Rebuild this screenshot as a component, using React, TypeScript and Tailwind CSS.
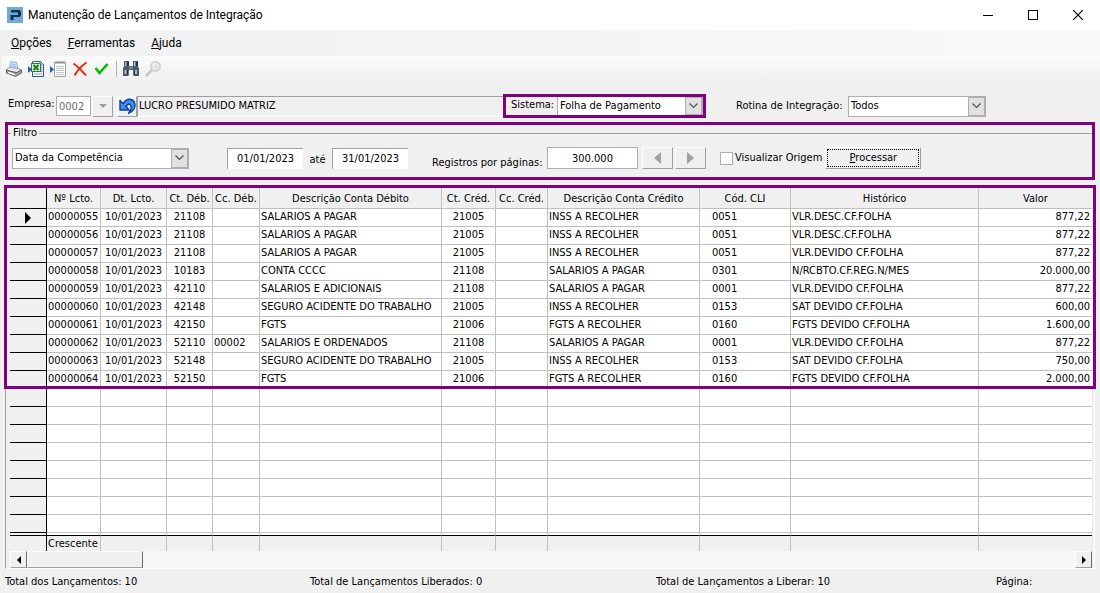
import type { ReactNode } from 'react';

type Entry = {
    number: string;
    debit: string;
    costCenter?: string;
    debitName: string;
    credit: string;
    creditName: string;
    code: string;
    history: string;
    value: string;
};

const entries: Entry[] = [
    { number: '00000055', debit: '21108', debitName: 'SALARIOS A PAGAR', credit: '21005', creditName: 'INSS A RECOLHER', code: '0051', history: 'VLR.DESC.CF.FOLHA', value: '877,22' },
    { number: '00000056', debit: '21108', debitName: 'SALARIOS A PAGAR', credit: '21005', creditName: 'INSS A RECOLHER', code: '0051', history: 'VLR.DESC.CF.FOLHA', value: '877,22' },
    { number: '00000057', debit: '21108', debitName: 'SALARIOS A PAGAR', credit: '21005', creditName: 'INSS A RECOLHER', code: '0051', history: 'VLR.DEVIDO CF.FOLHA', value: '877,22' },
    { number: '00000058', debit: '10183', debitName: 'CONTA CCCC', credit: '21108', creditName: 'SALARIOS A PAGAR', code: '0301', history: 'N/RCBTO.CF.REG.N/MES', value: '20.000,00' },
    { number: '00000059', debit: '42110', debitName: 'SALARIOS E ADICIONAIS', credit: '21108', creditName: 'SALARIOS A PAGAR', code: '0001', history: 'VLR.DEVIDO CF.FOLHA', value: '877,22' },
    { number: '00000060', debit: '42148', debitName: 'SEGURO ACIDENTE DO TRABALHO', credit: '21005', creditName: 'INSS A RECOLHER', code: '0153', history: 'SAT DEVIDO CF.FOLHA', value: '600,00' },
    { number: '00000061', debit: '42150', debitName: 'FGTS', credit: '21006', creditName: 'FGTS A RECOLHER', code: '0160', history: 'FGTS DEVIDO CF.FOLHA', value: '1.600,00' },
    { number: '00000062', debit: '52110', costCenter: '00002', debitName: 'SALARIOS E ORDENADOS', credit: '21108', creditName: 'SALARIOS A PAGAR', code: '0001', history: 'VLR.DEVIDO CF.FOLHA', value: '877,22' },
    { number: '00000063', debit: '52148', debitName: 'SEGURO ACIDENTE DO TRABALHO', credit: '21005', creditName: 'INSS A RECOLHER', code: '0153', history: 'SAT DEVIDO CF.FOLHA', value: '750,00' },
    { number: '00000064', debit: '52150', debitName: 'FGTS', credit: '21006', creditName: 'FGTS A RECOLHER', code: '0160', history: 'FGTS DEVIDO CF.FOLHA', value: '2.000,00' },
];

const headers = [
    'Nº Lcto.', 'Dt. Lcto.', 'Ct. Déb.', 'Cc. Déb.', 'Descrição Conta Débito', 'Ct. Créd.',
    'Cc. Créd.', 'Descrição Conta Crédito', 'Cód. CLI', 'Histórico', 'Valor',
];

const EMPTY_ROWS = 8;

const App = () => (
    <div className="flex min-h-screen flex-col overflow-hidden bg-[#f0f0f0] font-['DejaVu_Sans_Condensed','Noto_Sans',sans-serif] text-[11px] leading-[14px] text-black">
        <TitleBar />
        <MenuBar />
        <Toolbar />
        <CompanyRow />
        <FilterPanel />
        <EntriesGrid />
        <StatusBar />
    </div>
);

const TitleBar = () => (
    <header className="flex h-[30px] items-center bg-white pl-[7px] font-['Roboto',sans-serif] text-xs">
        <svg className="h-4 w-4" viewBox="0 0 16 16">
            <rect width="16" height="16" fill="#6fa9d6" />
            <path d="M4 3h8.500l1.500 1.500v4L12.500 10H6.500v3H3.500V8h7.500V5.500H4z" fill="#12324f" />
        </svg>
        <h1 className="ml-[5px] flex-1">Manutenção de Lançamentos de Integração</h1>
        <button aria-label="Minimizar" className="flex h-full w-[45px] items-center justify-center">
            <svg width="10" height="10" shapeRendering="crispEdges"><path d="M0 5.500h10" stroke="#000" /></svg>
        </button>
        <button aria-label="Maximizar" className="flex h-full w-[45px] items-center justify-center">
            <svg width="10" height="10" shapeRendering="crispEdges"><rect x=".5" y=".5" width="9" height="9" fill="none" stroke="#000" /></svg>
        </button>
        <button aria-label="Fechar" className="flex h-full w-[45px] items-center justify-center">
            <svg width="10" height="10"><path d="M0 0l10 10M10 0L0 10" stroke="#000" strokeWidth="1.200" /></svg>
        </button>
    </header>
);

const MenuBar = () => (
    <nav className="flex h-[26px] items-center gap-4 bg-linear-to-r from-[#f0f0f0] to-[#f9f9f9] pl-[11px] font-['Roboto',sans-serif] text-xs">
        <button><u>O</u>pções</button>
        <button><u>F</u>erramentas</button>
        <button><u>A</u>juda</button>
    </nav>
);

const ToolButton = ({ label, children }: { label: string; children: ReactNode }) => (
    <button aria-label={label} className="h-4 w-4">
        <svg className="h-4 w-4" viewBox="0 0 16 16">{children}</svg>
    </button>
);

const Toolbar = () => (
    <div className="ml-0.5 flex h-[26px] items-center gap-1.5 bg-linear-to-b from-[#fafafa] to-[#f0f0f0] pr-1 pb-px pl-1">
        <ToolButton label="Imprimir">
            <path d="M3.500 7.500L4.500 .5l6 1 1.500 6z" fill="#dceaff" stroke="#7ea3d8" strokeWidth=".8" />
            <path d="M5.500 3l4 .5M5.300 5l5 .5" stroke="#6f9ce0" strokeWidth=".8" />
            <path d="M.5 8.500L3.500 6.500l8.500 1L15.500 9l-4 2.500L.5 9.500z" fill="#ececec" stroke="#777" strokeWidth=".7" />
            <path d="M.5 9v3l9 3.500 6-3.500V9l-5.500 3z" fill="#a8a8a8" stroke="#444" strokeWidth=".8" />
            <path d="M2.500 11.500l6 2" stroke="#fff" strokeWidth="1.400" />
        </ToolButton>
        <ToolButton label="Exportar para Excel">
            <path d="M4.500 .5h8l3 3v12h-11z" fill="#fff" stroke="#2b57a5" />
            <path d="M12 1v3h3" fill="#b8cdec" stroke="#2b57a5" strokeWidth=".7" />
            <path d="M12 6.500h2.500M12 8.500h2.500M12 10.500h2.500M6 13h8.500" stroke="#7f9fce" />
            <rect x="3.500" y="2.500" width="9" height="8" fill="#d9edd3" stroke="#2f7d32" />
            <path d="M5.500 4l5 5M10.500 4l-5 5" stroke="#1c7a22" strokeWidth="2" />
            <path d="M0 5l4 3.500L0 12z" fill="#1f5fbf" />
        </ToolButton>
        <ToolButton label="Exportar texto">
            <path d="M4.500 1.500h11v14h-11z" fill="#fff" stroke="#a0a0a0" />
            <path d="M6 0v3M8 0v3M10 0v3M12 0v3M14 0v3" stroke="#777" strokeWidth=".8" />
            <path d="M6 5.500h8M6 7.500h8M6 9.500h8M6 11.500h8M6 13.500h8" stroke="#c4c4c4" />
            <path d="M0 5l4 3.500L0 12z" fill="#1f5fbf" />
        </ToolButton>
        <ToolButton label="Excluir">
            <path d="M1.500 2.500c5 3.500 8 7 12.500 12M14.500 1.500C9.500 5 5.500 9 2.500 14.500" fill="none" stroke="#e5290f" strokeWidth="2" />
        </ToolButton>
        <ToolButton label="Confirmar">
            <path d="M1.500 7l4 5L13.500 3" fill="none" stroke="#00c000" strokeWidth="2.600" />
        </ToolButton>
        <span className="h-4 w-px bg-[#b8b8b8]" />
        <ToolButton label="Localizar">
            <path d="M1 0h5v5h4V0h5v6l1 1v8h-5.500V9h-5v6H0V7l1-1z" fill="#4a5a6b" />
            <path d="M1.500 9h2v4h-2zM12 9h2v4h-2zM2 1h1.500v4H2zM11 1h1.500v4H11z" fill="#a9bacb" />
            <path d="M4 1h2v4H4zM13 1h2v4h-2zM4 9h1.500v5H4zM10.500 9H12v5h-1.500z" fill="#26313d" />
            <path d="M6 5.500h4V8H6z" fill="#73869a" />
        </ToolButton>
        <ToolButton label="Pesquisar">
            <path d="M7 9l-5.500 5.500" stroke="#c9c9c9" strokeWidth="2.800" strokeLinecap="round" />
            <circle cx="10.500" cy="5.500" r="4.700" fill="#e6e6e6" stroke="#cdcdcd" strokeWidth="1.400" />
            <path d="M8 5a2.500 2.500 0 0 1 2.500-2.500" fill="none" stroke="#fff" />
        </ToolButton>
    </div>
);

const Select = ({ id, value, className = '', label }: { id: string; value: string; className?: string; label?: string }) => (
    <div className={`relative flex border border-[#adadb3] bg-white ${className}`}>
        <select id={id} aria-label={label} className="w-full appearance-none pl-0.5 outline-none">
            <option>{value}</option>
        </select>
        <span className="pointer-events-none absolute inset-y-0 right-0 flex w-[17px] items-center justify-center border border-[#adadb3] bg-[#e1e1e1]">
            <svg width="9" height="6"><path d="M.5 .5l4 4 4-4" fill="none" stroke="#505050" strokeWidth="1.200" /></svg>
        </span>
    </div>
);

const raised = 'border border-t-white border-l-white border-r-[#a0a0a0] border-b-[#a0a0a0]';

const CompanyRow = () => (
    <div className="flex h-10 items-center pt-2 pl-2">
        <label htmlFor="company" className="w-12 pb-1">Empresa:</label>
        <input id="company" defaultValue="0002" disabled className="h-5 w-[35px] border border-[#adadb3] bg-white pl-0.5 text-[#6d6d6d]" />
        <button aria-label="Selecionar empresa" className={`ml-px flex h-[21px] w-[21px] items-center justify-center ${raised}`}>
            <svg width="8" height="4"><path d="M0 0h8L4 4z" fill="#a0a0a0" /></svg>
        </button>
        <button aria-label="Voltar empresa" className={`ml-1 flex h-[21px] w-5 items-center justify-center ${raised}`}>
            <svg width="17" height="16" viewBox="0 0 17 16">
                <path d="M1 2.500L4 5.500C6 2.500 9 .8 12 1.500c4 1 5 6 3 9.500-1.200 2-3 3.500-5.500 4.300C11.500 13 12.800 9.500 11.500 7 10.300 5 8.500 6.500 7 8.500l3 3.500H1z" fill="#3f8df0" stroke="#0b3f9c" strokeWidth="1.400" strokeLinejoin="round" />
            </svg>
        </button>
        <output className="flex h-[21px] flex-1 items-center border border-t-[#a0a0a0] border-r-0 border-b-white border-l-[#a0a0a0] pl-px">
            LUCRO PRESUMIDO MATRIZ
        </output>
        <div className="flex h-6 w-[203px] items-center border-3 border-[#800080] pl-[5px]">
            <label htmlFor="system" className="w-[46px] pb-0.5">Sistema:</label>
            <Select id="system" value="Folha de Pagamento" className="h-[18px] flex-1 border-y-0" />
        </div>
        <label htmlFor="routine" className="ml-[30px] w-28">Rotina de Integração:</label>
        <Select id="routine" value="Todos" className="mr-[114px] h-[21px] w-[138px]" />
    </div>
);

const FilterPanel = () => (
    <div className="mx-[5px] border-3 border-[#800080]">
        <fieldset className="h-[52px]">
            <legend className="flex w-full items-center gap-0.5 pt-px">
                <span className="w-[3px] border-t border-[#a0a0a0]" />
                <span>Filtro</span>
                <span className="flex-1 border-t border-[#a0a0a0]" />
            </legend>
            <div className="flex h-9 items-center pl-1">
                <Select id="period" label="Tipo de data" value="Data da Competência" className="h-[21px] w-[177px]" />
                <input aria-label="Data inicial" defaultValue="01/01/2023" className="ml-[38px] h-[21px] w-[76px] border-t border-l border-[#a0a0a0] bg-white text-center" />
                <label htmlFor="date-end" className="w-[29px] pt-1 text-center">até</label>
                <input id="date-end" defaultValue="31/01/2023" className="h-[21px] w-[76px] border-t border-l border-[#a0a0a0] bg-white text-center" />
                <label htmlFor="page-size" className="w-[139px] pt-2.5 pl-6 whitespace-nowrap">Registros por páginas:</label>
                <input id="page-size" defaultValue="300.000" className="h-[22px] w-[91px] border border-[#adadb3] bg-white text-center" />
                <button aria-label="Página anterior" className={`ml-1 flex h-[22px] w-[31px] items-center justify-center ${raised}`}>
                    <svg width="7" height="12"><path d="M7 0v12L0 6z" fill="#a0a0a0" /></svg>
                </button>
                <button aria-label="Próxima página" className={`ml-0.5 flex h-[22px] w-[31px] items-center justify-center ${raised}`}>
                    <svg width="7" height="12"><path d="M0 0v12l7-6z" fill="#a0a0a0" /></svg>
                </button>
                <label className="ml-3.5 flex items-center gap-0.5 whitespace-nowrap">
                    <input type="checkbox" className="h-[13px] w-[13px] appearance-none border border-[#adadb3] bg-white" />
                    Visualizar Origem
                </label>
                <button className={`ml-[3px] h-[22px] w-24 p-px ${raised}`}>
                    <span className="flex h-full items-center justify-center border border-dotted border-black"><span><u>P</u>rocessar</span></span>
                </button>
            </div>
        </fieldset>
    </div>
);

const Cell = ({ className = '', children }: { className?: string; children?: ReactNode }) => (
    <td className={`border-r border-b border-[#c0c0c0] p-0 align-top leading-[15px] ${className}`}>{children}</td>
);

const RowMarker = ({ active = false }: { active?: boolean }) => (
    <td className="border-r border-b border-black bg-[#f0f0f0] p-0">
        {active && <svg className="mx-auto" width="6" height="12"><path d="M0 0v12l6-6z" /></svg>}
    </td>
);

const EntriesGrid = () => (
    <div className="relative mx-[5px] mt-[7px] border border-t-0 border-r-white border-b-white border-l-[#a0a0a0] pt-px pr-0.5 pl-1">
        <table className="w-full table-fixed border-separate border-spacing-0 bg-white whitespace-nowrap">
            <colgroup>
                <col className="w-[37px]" />
                <col className="w-[54px]" />
                <col className="w-[66px]" />
                <col className="w-[46px]" />
                <col className="w-[47px]" />
                <col className="w-[182px]" />
                <col className="w-[54px]" />
                <col className="w-[52px]" />
                <col className="w-[152px]" />
                <col className="w-[91px]" />
                <col className="w-[188px]" />
                <col />
            </colgroup>
            <thead>
                <tr className="h-[21px] bg-[#f0f0f0]">
                    <th aria-label="Marcador" className="border-r border-b border-black p-0" />
                    {headers.map((header) => (
                        <th key={header} className="border-r border-b border-[#c0c0c0] p-0 pt-0.5 font-normal last:border-r-0">{header}</th>
                    ))}
                </tr>
            </thead>
            <tbody>
                {entries.map((entry, index) => (
                    <tr key={entry.number} className="h-[18px]">
                        <RowMarker active={index === 0} />
                        <Cell className="pl-px">{entry.number}</Cell>
                        <Cell className="text-center">10/01/2023</Cell>
                        <Cell className="text-center">{entry.debit}</Cell>
                        <Cell className="pl-px">{entry.costCenter}</Cell>
                        <Cell className="pl-px">{entry.debitName}</Cell>
                        <Cell className="text-center">{entry.credit}</Cell>
                        <Cell />
                        <Cell className="pl-px">{entry.creditName}</Cell>
                        <Cell className="pl-3">{entry.code}</Cell>
                        <Cell className="pl-px">{entry.history}</Cell>
                        <Cell className="border-r-0 pr-0.5 text-right">{entry.value}</Cell>
                    </tr>
                ))}
                {Array.from({ length: EMPTY_ROWS }, (_, row) => (
                    <tr key={row} className="h-[18px]">
                        <RowMarker />
                        {headers.map((header) => <Cell key={header} className="last:border-r-0" />)}
                    </tr>
                ))}
                <tr className="h-[3px]">
                    <td className="border-r border-b border-black bg-[#f0f0f0] p-0" />
                    {headers.map((header) => (
                        <td key={header} className="border-r border-b border-r-[#c0c0c0] border-b-black p-0 last:border-r-0" />
                    ))}
                </tr>
            </tbody>
            <tfoot>
                <tr className="h-[15px] bg-[#f0f0f0]">
                    <td className="border-r border-black p-0" />
                    {headers.map((header, index) => (
                        <td key={header} className="border-r border-[#c0c0c0] p-0 pl-px last:border-r-0">{index === 0 && 'Crescente'}</td>
                    ))}
                </tr>
            </tfoot>
        </table>
        <div className="flex h-[17px] bg-[#f7f7f7]">
            <button aria-label="Rolar para a esquerda" className="flex w-[17px] items-center justify-center border border-t-white border-r-[#696969] border-b-[#a0a0a0] border-l-white bg-[#f0f0f0]">
                <svg width="4" height="8"><path d="M4 0v8L0 4z" /></svg>
            </button>
            <div className="w-[116px] border border-t-white border-r-[#696969] border-b-[#a0a0a0] border-l-white bg-[#f0f0f0]" />
            <div className="flex-1" />
            <button aria-label="Rolar para a direita" className="flex w-[17px] items-center justify-center border border-t-white border-r-[#696969] border-b-[#a0a0a0] border-l-white bg-[#f0f0f0]">
                <svg width="4" height="8"><path d="M0 0v8l4-4z" /></svg>
            </button>
        </div>
        {/* Highlight over the filled rows */}
        <div className="pointer-events-none absolute -top-0.5 -right-0.5 -left-0.5 h-[204px] border-3 border-[#800080]" />
    </div>
);

const StatusBar = () => (
    <footer className="flex h-[26px] items-center pl-[5px] whitespace-nowrap">
        <span className="w-[305px]">Total dos Lançamentos: 10</span>
        <span className="w-[346px]">Total de Lançamentos Liberados: 0</span>
        <span className="w-[340px]">Total de Lançamentos a Liberar: 10</span>
        <span>Página:</span>
    </footer>
);

export default App;
